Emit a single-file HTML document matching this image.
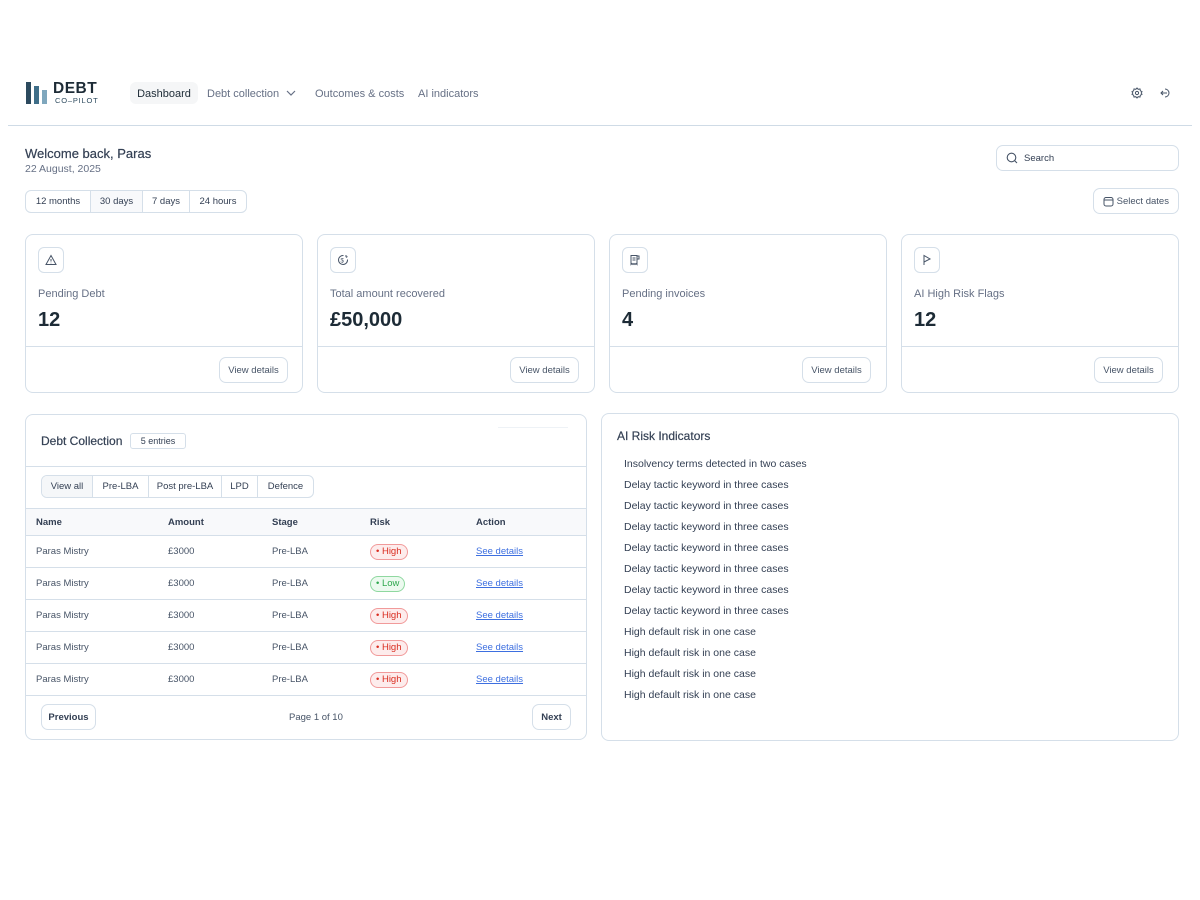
<!DOCTYPE html>
<html><head><meta charset="utf-8"><style>
*{box-sizing:border-box;margin:0;padding:0}
body{width:1200px;height:900px;background:#fff;font-family:"Liberation Sans",sans-serif;color:#344054;position:relative;overflow:hidden}
.a{position:absolute}
.b{border:1px solid #d5dfe9}
.nav{font-size:11px;color:#667085;top:88px}
.card{border:1px solid #d5dfe9;border-radius:8px;background:#fff}
.ic{width:26px;height:26px;border:1px solid #d5dfe9;border-radius:6px;display:flex;align-items:center;justify-content:center}
.btn{border:1px solid #d5dfe9;border-radius:7px;font-size:9.5px;color:#475467;display:flex;align-items:center;justify-content:center;background:#fff}
.seg{display:flex;border:1px solid #d5dfe9;border-radius:6px;overflow:hidden;font-size:9.5px;color:#344054}
.seg div{border-right:1px solid #d5dfe9;display:flex;align-items:center;justify-content:center}
.seg div:last-child{border-right:none}
.row{position:absolute;left:0;width:560px;height:32px;border-top:1px solid #d5dfe9;font-size:9.5px;color:#475467}
.row span{position:absolute;top:10px}
.pill{position:absolute;top:8px;height:16px;border-radius:9px;font-size:9.5px;padding:0 5px;line-height:14px}
.hi{border:1px solid #f19a9a;background:#fdecec;color:#d92d20}
.lo{border:1px solid #8fd8a0;background:#ecfaef;color:#2fa84f}
.lk{color:#3d6fe0;text-decoration:underline}
.ai{position:absolute;left:624px;font-size:10.5px;color:#344054}
</style></head><body>
<div class="a" style="left:26px;top:82px;width:5px;height:22px;background:#2c4a5e"></div>
<div class="a" style="left:34px;top:86px;width:5px;height:18px;background:#3f6e88"></div>
<div class="a" style="left:42px;top:90px;width:5px;height:14px;background:#7fa7bd"></div>
<div class="a" style="left:53px;top:80px;font-size:15.5px;font-weight:bold;color:#1d2b36;letter-spacing:0.5px">DEBT</div>
<div class="a" style="left:55px;top:96px;font-size:7.5px;color:#2c4a5e;letter-spacing:0.8px">CO–PILOT</div>
<div class="a" style="left:130px;top:82px;width:68px;height:22px;background:#f5f6f7;border-radius:6px;font-size:11px;color:#1d2b36;display:flex;align-items:center;justify-content:center;padding-top:1px">Dashboard</div>
<div class="a nav" style="left:207px">Debt collection</div>
<svg class="a" style="left:286px;top:89px" width="10" height="8" viewBox="0 0 10 8"><path d="M1 2l4 4 4-4" fill="none" stroke="#667085" stroke-width="1.2"/></svg>
<div class="a nav" style="left:315px">Outcomes &amp; costs</div>
<div class="a nav" style="left:418px">AI indicators</div>
<svg class="a" style="left:1131px;top:87px" width="12" height="12" viewBox="0 0 12 12" fill="none" stroke="#475467" stroke-width="1"><path d="M6 1l1.2 1.3 1.8-.3.4 1.8 1.6.9-.8 1.3.8 1.3-1.6.9-.4 1.8-1.8-.3L6 11 4.8 9.7 3 10l-.4-1.8L1 7.3 1.8 6 1 4.7l1.6-.9L3 2l1.8.3z"/><circle cx="6" cy="6" r="1.6"/></svg>
<svg class="a" style="left:1160px;top:87px" width="12" height="12" viewBox="0 0 12 12" fill="none" stroke="#475467" stroke-width="1"><path d="M5 2a4 4 0 1 1 0 8M1 6h6M3 4L1 6l2 2"/></svg>
<div class="a" style="left:8px;top:125px;width:1184px;height:1px;background:#cfdbe6"></div>

<div class="a" style="left:25px;top:146px;font-size:13px;color:#344054;-webkit-text-stroke:0.2px #344054">Welcome back, Paras</div>
<div class="a" style="left:25px;top:163px;font-size:10.5px;color:#667085">22 August, 2025</div>
<div class="a seg" style="left:25px;top:190px;height:23px">
<div style="width:65px">12 months</div><div style="width:52px;background:#f8f9fb">30 days</div><div style="width:47px">7 days</div><div style="width:56px">24 hours</div></div>

<div class="a b" style="left:996px;top:145px;width:183px;height:26px;border-radius:7px"></div>
<svg class="a" style="left:1006px;top:152px" width="12" height="12" viewBox="0 0 12 12" fill="none" stroke="#475467" stroke-width="1.1"><circle cx="5.5" cy="5.5" r="4.3"/><path d="M8.6 8.6l2.4 2.4"/></svg>
<div class="a" style="left:1024px;top:153px;font-size:9.5px;color:#344054">Search</div>
<div class="a btn" style="left:1093px;top:188px;width:86px;height:26px"><svg width="11" height="11" viewBox="0 0 11 11" fill="none" stroke="#475467"><rect x="1" y="1.5" width="9" height="8.5" rx="2"/><path d="M1 4h9"/></svg>&nbsp;Select dates</div>

<div class="a card" style="left:25px;top:234px;width:278px;height:159px"></div>
<div class="a card" style="left:317px;top:234px;width:278px;height:159px"></div>
<div class="a card" style="left:609px;top:234px;width:278px;height:159px"></div>
<div class="a card" style="left:901px;top:234px;width:278px;height:159px"></div>
<div class="a" style="left:26px;top:346px;width:276px;height:1px;background:#d5dfe9"></div>
<div class="a" style="left:318px;top:346px;width:276px;height:1px;background:#d5dfe9"></div>
<div class="a" style="left:610px;top:346px;width:276px;height:1px;background:#d5dfe9"></div>
<div class="a" style="left:902px;top:346px;width:276px;height:1px;background:#d5dfe9"></div>

<div class="a ic" style="left:38px;top:247px"><svg width="12" height="12" viewBox="0 0 12 12" fill="none" stroke="#475467"><path d="M6 1.5L11 10.5H1z"/><path d="M6 5v2.5M6 8.8v.4"/></svg></div>
<div class="a ic" style="left:330px;top:247px"><svg width="12" height="12" viewBox="0 0 12 12" fill="none" stroke="#475467"><path d="M10.5 5.5A4.5 4.5 0 1 1 6.5 1.5"/><path d="M9 1v2M10.5 2.5l-1.5 1"/><text x="3.5" y="8.5" font-size="6" fill="#475467" stroke="none" font-family="Liberation Sans">$</text></svg></div>
<div class="a ic" style="left:622px;top:247px"><svg width="12" height="12" viewBox="0 0 12 12" fill="none" stroke="#475467"><path d="M2 1.5h6v9l-1-1-1 1-1-1-1 1-1-1-1 1zM8 2h2v3H8"/><path d="M3.5 4h3M3.5 6h3"/></svg></div>
<div class="a ic" style="left:914px;top:247px"><svg width="12" height="12" viewBox="0 0 12 12" fill="none" stroke="#475467"><path d="M3 11V1.5l6 3.5-6 3"/></svg></div>

<div class="a" style="left:38px;top:288px;font-size:11px;color:#667085">Pending Debt</div>
<div class="a" style="left:330px;top:288px;font-size:11px;color:#667085">Total amount recovered</div>
<div class="a" style="left:622px;top:288px;font-size:11px;color:#667085">Pending invoices</div>
<div class="a" style="left:914px;top:288px;font-size:11px;color:#667085">AI High Risk Flags</div>
<div class="a" style="left:38px;top:309px;font-size:20px;font-weight:bold;color:#1d2b36">12</div>
<div class="a" style="left:330px;top:309px;font-size:20px;font-weight:bold;color:#1d2b36">£50,000</div>
<div class="a" style="left:622px;top:309px;font-size:20px;font-weight:bold;color:#1d2b36">4</div>
<div class="a" style="left:914px;top:309px;font-size:20px;font-weight:bold;color:#1d2b36">12</div>
<div class="a btn" style="left:219px;top:357px;width:69px;height:26px">View details</div>
<div class="a btn" style="left:510px;top:357px;width:69px;height:26px">View details</div>
<div class="a btn" style="left:802px;top:357px;width:69px;height:26px">View details</div>
<div class="a btn" style="left:1094px;top:357px;width:69px;height:26px">View details</div>

<div class="a card" style="left:25px;top:414px;width:562px;height:326px;overflow:hidden">
<div class="a" style="left:15px;top:19px;font-size:12px;color:#344054;-webkit-text-stroke:0.2px #344054">Debt Collection</div>
<div class="a" style="left:104px;top:18px;width:56px;height:16px;border:1px solid #d5dfe9;border-radius:3px;font-size:9px;color:#344054;text-align:center;line-height:14px">5 entries</div>
<div class="a" style="left:472px;top:12px;width:70px;height:1px;background:#eef2f6"></div>
<div class="a" style="left:0;top:51px;width:562px;height:1px;background:#d5dfe9"></div>
<div class="a seg" style="left:15px;top:60px;height:23px;font-size:9.5px">
<div style="width:51px;background:#f5f7f9">View all</div><div style="width:56px">Pre-LBA</div><div style="width:73px">Post pre-LBA</div><div style="width:36px">LPD</div><div style="width:55px">Defence</div></div>
<div class="a" style="left:0;top:93px;width:562px;height:27px;background:#f8f9fb;border-top:1px solid #d5dfe9;font-size:9.5px;font-weight:bold;color:#344054">
<span class="a" style="left:10px;top:8px">Name</span><span class="a" style="left:142px;top:8px">Amount</span><span class="a" style="left:246px;top:8px">Stage</span><span class="a" style="left:344px;top:8px">Risk</span><span class="a" style="left:450px;top:8px">Action</span></div>
<div class="row" style="top:120px"><span style="left:10px">Paras Mistry</span><span style="left:142px">£3000</span><span style="left:246px">Pre-LBA</span><div class="pill hi" style="left:344px">• High</div><span class="lk" style="left:450px">See details</span></div>
<div class="row" style="top:152px"><span style="left:10px">Paras Mistry</span><span style="left:142px">£3000</span><span style="left:246px">Pre-LBA</span><div class="pill lo" style="left:344px">• Low</div><span class="lk" style="left:450px">See details</span></div>
<div class="row" style="top:184px"><span style="left:10px">Paras Mistry</span><span style="left:142px">£3000</span><span style="left:246px">Pre-LBA</span><div class="pill hi" style="left:344px">• High</div><span class="lk" style="left:450px">See details</span></div>
<div class="row" style="top:216px"><span style="left:10px">Paras Mistry</span><span style="left:142px">£3000</span><span style="left:246px">Pre-LBA</span><div class="pill hi" style="left:344px">• High</div><span class="lk" style="left:450px">See details</span></div>
<div class="row" style="top:248px"><span style="left:10px">Paras Mistry</span><span style="left:142px">£3000</span><span style="left:246px">Pre-LBA</span><div class="pill hi" style="left:344px">• High</div><span class="lk" style="left:450px">See details</span></div>
<div class="a" style="left:0;top:280px;width:562px;height:1px;background:#d5dfe9"></div>
<div class="a btn" style="left:15px;top:289px;width:55px;height:26px;font-weight:bold;color:#344054">Previous</div>
<div class="a" style="left:263px;top:297px;font-size:9.5px;color:#475467">Page 1 of 10</div>
<div class="a btn" style="left:506px;top:289px;width:39px;height:26px;font-weight:bold;color:#344054">Next</div>
</div>

<div class="a card" style="left:601px;top:413px;width:578px;height:328px"></div>
<div class="a" style="left:617px;top:429px;font-size:12px;color:#344054;-webkit-text-stroke:0.2px #344054">AI Risk Indicators</div>
<div class="ai" style="top:458px">Insolvency terms detected in two cases</div>
<div class="ai" style="top:479px">Delay tactic keyword in three cases</div>
<div class="ai" style="top:500px">Delay tactic keyword in three cases</div>
<div class="ai" style="top:521px">Delay tactic keyword in three cases</div>
<div class="ai" style="top:542px">Delay tactic keyword in three cases</div>
<div class="ai" style="top:563px">Delay tactic keyword in three cases</div>
<div class="ai" style="top:584px">Delay tactic keyword in three cases</div>
<div class="ai" style="top:605px">Delay tactic keyword in three cases</div>
<div class="ai" style="top:626px">High default risk in one case</div>
<div class="ai" style="top:647px">High default risk in one case</div>
<div class="ai" style="top:668px">High default risk in one case</div>
<div class="ai" style="top:689px">High default risk in one case</div>
</body></html>
